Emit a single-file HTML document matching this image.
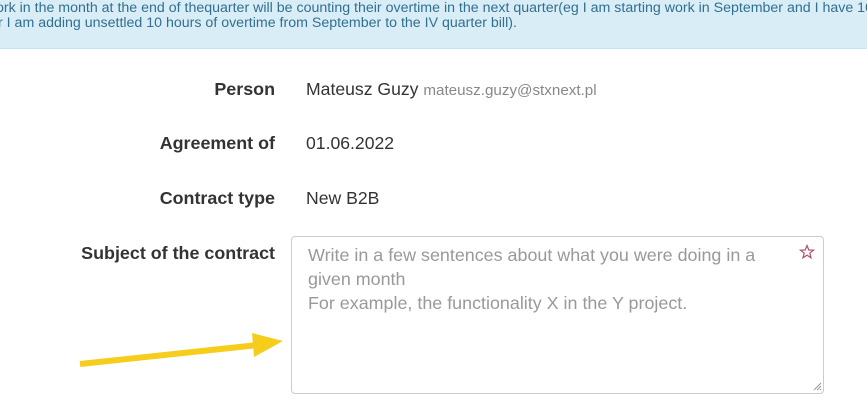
<!DOCTYPE html>
<html><head><style>
body{margin:0;width:867px;height:413px;overflow:hidden;background:#fff;font-family:"Liberation Sans",sans-serif;position:relative}
.ban{position:absolute;left:0;top:0;width:867px;height:48px;background:#d9edf7;border-bottom:1px solid #bce8f1;color:#31708f;font-size:14.2px;line-height:20px;white-space:nowrap}
.ban div{position:absolute}
.lab{position:absolute;right:592px;font-weight:bold;font-size:17.9px;color:#333}
.val{position:absolute;left:306px;font-size:17.6px;color:#333}
.ta{position:absolute;left:291px;top:236px;width:531px;height:156px;border:1px solid #ccc;border-radius:4px;box-sizing:content-box}
.ph{position:absolute;left:308px;top:243px;font-size:17.9px;line-height:24px;color:#999;white-space:nowrap}
</style></head><body>
<div class="ban"><div style="top:-2px;left:-4px">ork in the month at the end of thequarter will be counting their overtime in the next quarter(eg I am starting work in September and I have 10</div><div style="top:13px;left:-2px">r I am adding unsettled 10 hours of overtime from September to the IV quarter bill).</div></div>
<div class="lab" style="top:79px">Person</div>
<div class="val" style="top:79px">Mateusz Guzy <span style="font-size:15.2px;color:#888">mateusz.guzy@stxnext.pl</span></div>
<div class="lab" style="top:133px">Agreement of</div>
<div class="val" style="top:133px">01.06.2022</div>
<div class="lab" style="top:188px">Contract type</div>
<div class="val" style="top:188px">New B2B</div>
<div class="lab" style="top:243px">Subject of the contract</div>
<div class="ta"></div>
<div class="ph">Write in a few sentences about what you were doing in a<br>given month<br>For example, the functionality X in the Y project.</div>
<svg style="position:absolute;left:799px;top:244px" width="16" height="16" viewBox="0 0 16 16"><polygon points="8,1.5 9.8,6 14.5,6.2 10.8,9.2 12,13.8 8,11.2 4,13.8 5.2,9.2 1.5,6.2 6.2,6" fill="none" stroke="#b05070" stroke-width="1.2"/></svg>
<svg style="position:absolute;left:812px;top:381px" width="10" height="10"><path d="M9 2L2 9M9 5L5 9M9 8L8 9" stroke="#999" stroke-width="1"/></svg>
<svg style="position:absolute;left:0;top:0" width="867" height="413"><line x1="80" y1="364" x2="258" y2="345" stroke="#f6cd1c" stroke-width="6"/><polygon points="252,333 283,341 254,357" fill="#f6cd1c"/></svg>
</body></html>
